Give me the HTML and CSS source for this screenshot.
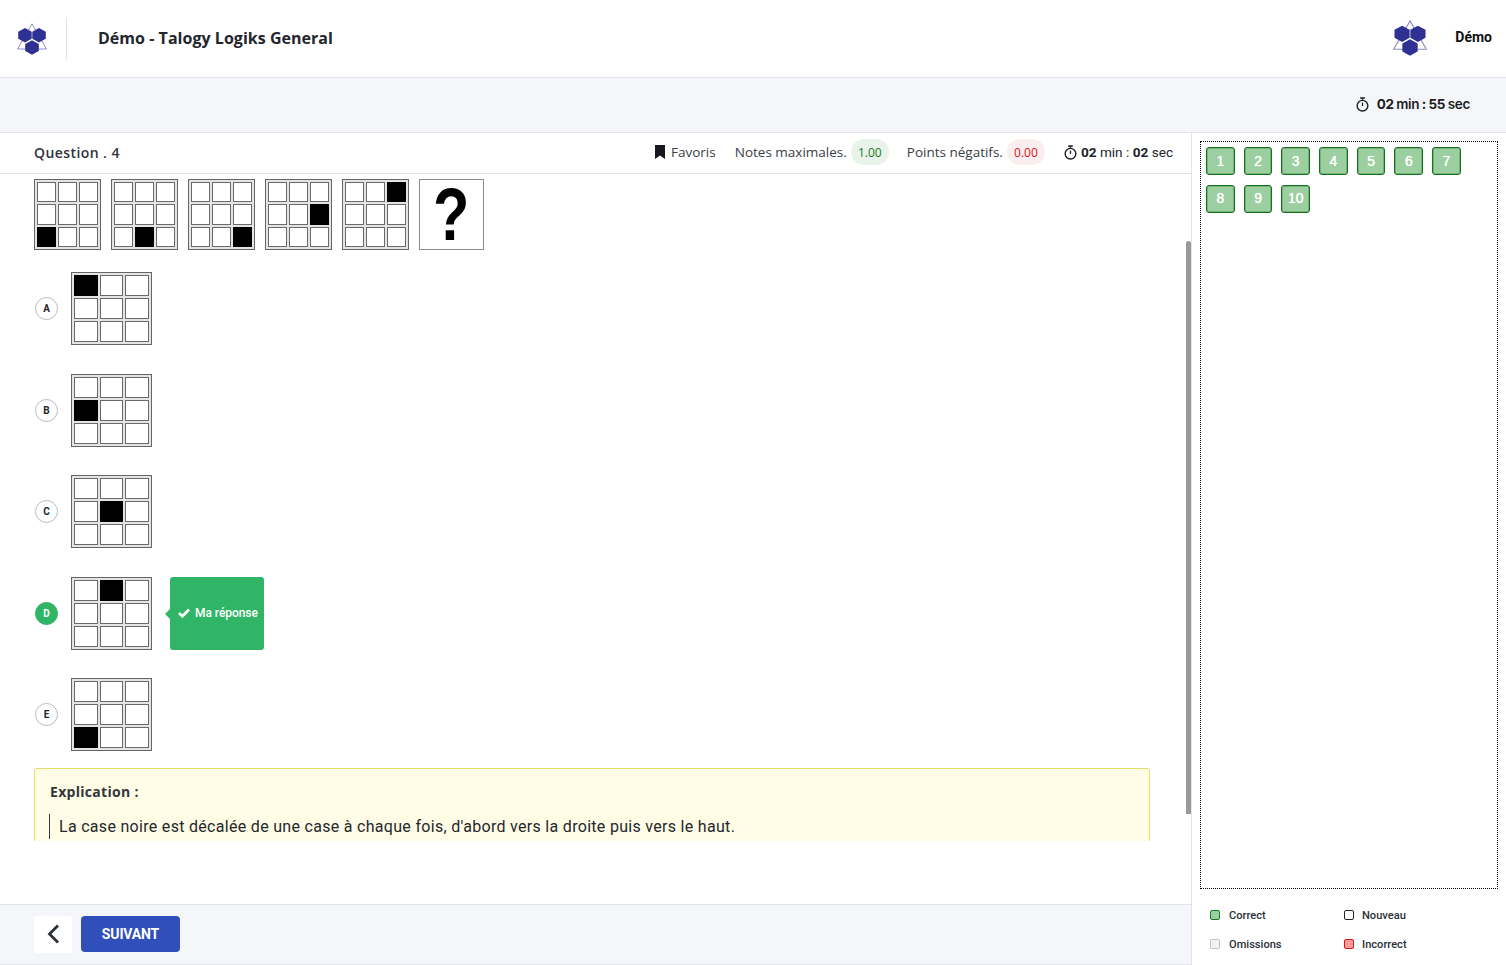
FILE: index.html
```html
<!DOCTYPE html>
<html lang="fr">
<head>
<meta charset="utf-8">
<title>Démo - Talogy Logiks General</title>
<link rel="stylesheet" href="styles.css">
</head>
<body>
<svg class="defs" width="0" height="0" aria-hidden="true">
  <symbol id="logo" viewBox="0 0 30 32">
    <path d="M15 .8 L29.500 26 L.5 26 Z" fill="none" stroke="#8d8fc6" stroke-width="1"/>
    <path d="M8 5 L14.700 8.700 V15.800 L8 19.500 L1.200 15.800 V8.700 Z M22 5 L28.800 8.700 V15.800 L22 19.500 L15.300 15.800 V8.700 Z M15 17.200 L21.800 20.900 V28 L15 31.700 L8.200 28 V20.900 Z" fill="#2e3192"/>
  </symbol>
  <symbol id="timer" viewBox="0 0 16 16">
    <path d="M5.500 1h5M8 1v2" fill="none" stroke="currentColor" stroke-width="1.500"/>
    <circle cx="8" cy="9.300" r="5.700" fill="none" stroke="currentColor" stroke-width="1.500"/>
    <path d="M8 9.500V6" fill="none" stroke="currentColor" stroke-width="1.400"/>
  </symbol>
</svg>
<header class="top">
  <svg class="logo"><use href="#logo"/></svg>
  <span class="divider"></span>
  <h1 class="title">Démo - Talogy Logiks General</h1>
  <svg class="logo logo-user"><use href="#logo"/></svg>
  <span class="user">Démo</span>
</header>
<div class="sub">
  <svg class="timer"><use href="#timer"/></svg>
  <span class="total-time"><b>02</b> <i>min</i> <b>:</b> <b>55</b> <i>sec</i></span>
</div>
<main class="main">
  <section class="left">
    <div class="qbar">
      <span class="qnum">Question . 4</span>
      <div class="qmeta">
        <span class="meta fav"><svg class="bookmark" viewBox="0 0 10 14"><path d="M0 0H10V14L5 10.500 0 14Z"/></svg>Favoris</span>
        <span class="meta">Notes maximales.<em class="pill pos">1.00</em></span>
        <span class="meta">Points négatifs.<em class="pill neg">0.00</em></span>
        <span class="meta qtime"><svg class="timer timer-q"><use href="#timer"/></svg><b>02</b> min : <b>02</b> sec</span>
      </div>
    </div>
    <div class="scroll">
      <div class="series">
        <div class="fig small"><i></i><i></i><i></i><i></i><i></i><i></i><i class="k"></i><i></i><i></i></div>
        <div class="fig small"><i></i><i></i><i></i><i></i><i></i><i></i><i></i><i class="k"></i><i></i></div>
        <div class="fig small"><i></i><i></i><i></i><i></i><i></i><i></i><i></i><i></i><i class="k"></i></div>
        <div class="fig small"><i></i><i></i><i></i><i></i><i></i><i class="k"></i><i></i><i></i><i></i></div>
        <div class="fig small"><i></i><i></i><i class="k"></i><i></i><i></i><i></i><i></i><i></i><i></i></div>
        <div class="qmark"><span class="qglyph">?</span></div>
      </div>
      <div class="option">
        <span class="letter">A</span>
        <div class="fig"><i class="k"></i><i></i><i></i><i></i><i></i><i></i><i></i><i></i><i></i></div>
      </div>
      <div class="option">
        <span class="letter">B</span>
        <div class="fig"><i></i><i></i><i></i><i class="k"></i><i></i><i></i><i></i><i></i><i></i></div>
      </div>
      <div class="option">
        <span class="letter">C</span>
        <div class="fig"><i></i><i></i><i></i><i></i><i class="k"></i><i></i><i></i><i></i><i></i></div>
      </div>
      <div class="option">
        <span class="letter chosen">D</span>
        <div class="fig"><i></i><i class="k"></i><i></i><i></i><i></i><i></i><i></i><i></i><i></i></div>
        <div class="answer">
          <svg class="check" viewBox="0 0 12 10"><path d="M1 5 4.400 8.300 11 1.500" fill="none" stroke="#fff" stroke-width="2.700"/></svg>
          Ma réponse
        </div>
      </div>
      <div class="option">
        <span class="letter">E</span>
        <div class="fig"><i></i><i></i><i></i><i></i><i></i><i></i><i class="k"></i><i></i><i></i></div>
      </div>
      <div class="explain">
        <h2 class="explain-title">Explication :</h2>
        <p class="explain-text">La case noire est décalée de une case à chaque fois, d'abord vers la droite puis vers le haut.</p>
      </div>
    </div>
    <div class="footer">
      <button class="back" aria-label="Précédent"><svg viewBox="0 0 14 20" width="14" height="20"><path d="M12 1.500 3.500 10 12 18.500" fill="none" stroke="#2b2f38" stroke-width="2.800"/></svg></button>
      <button class="next">SUIVANT</button>
    </div>
    <span class="scrollbar"></span>
  </section>
  <aside class="right">
    <div class="palette">
      <span class="num">1</span><span class="num">2</span><span class="num">3</span><span class="num">4</span><span class="num">5</span><span class="num">6</span><span class="num">7</span><span class="num">8</span><span class="num">9</span><span class="num">10</span>
    </div>
    <div class="legend">
      <span class="key"><i class="sw sw-correct"></i>Correct</span>
      <span class="key"><i class="sw sw-new"></i>Nouveau</span>
      <span class="key"><i class="sw sw-omit"></i>Omissions</span>
      <span class="key"><i class="sw sw-wrong"></i>Incorrect</span>
    </div>
  </aside>
</main>
</body>
</html>
```
FILE: styles.css
```css
* { box-sizing: border-box; }
html, body { margin: 0; height: 965px; overflow: hidden; background: #fff; }
body { font-family: "Open Sans", sans-serif; color: #2b2f38; }
.defs { position: absolute; }

.top { height: 78px; display: flex; align-items: center; border-bottom: 1px solid #e2e4ea; padding-left: 17px; padding-right: 14px; }
.logo { width: 30px; height: 32px; flex: none; }
.divider { width: 1px; height: 42px; background: #e3e4e8; margin-left: 19px; margin-right: 31px; }
.title { margin: 0; padding-bottom: 2px; font-size: 16px; font-weight: 700; letter-spacing: 0.03px; color: #23262d; flex: 1; }
.logo-user { width: 34px; height: 36px; margin-right: 28px; margin-bottom: 1px; }
.user { font-family: "Roboto", sans-serif; font-weight: 700; font-size: 14px; color: #111; padding-bottom: 3px; }

.sub { height: 55px; background: #f5f6fa; border-bottom: 1px solid #e2e4ea; display: flex; align-items: center; justify-content: flex-end; padding-right: 36px; padding-bottom: 2px; }
.timer { width: 15px; height: 15px; color: #1c1e24; margin-right: 7px; }
.total-time { font-family: "Inter", sans-serif; font-size: 13.500px; color: #1c1e24; word-spacing: -1px; letter-spacing: -0.3px; }
.total-time b { font-weight: 700; }
.total-time i { font-style: normal; font-weight: 600; }

.main { display: flex; height: 832px; }
.left { position: relative; width: 1192px; flex: none; border-right: 1px solid #e2e4ea; display: flex; flex-direction: column; }
.qbar { height: 41px; flex: none; border-bottom: 1px solid #e2e4ea; display: flex; align-items: center; justify-content: space-between; padding: 0 18px 2px 34px; }
.qnum { font-size: 14px; font-weight: 600; letter-spacing: 0.42px; color: #30343c; }
.qmeta { display: flex; align-items: center; gap: 18px; }
.meta { display: flex; align-items: center; font-size: 13.500px; color: #3a3e46; }
.fav { margin-right: 1px; }
.bookmark { width: 10px; height: 14px; margin-right: 6px; fill: #16181d; }
.pill { font-style: normal; font-size: 12px; height: 26px; width: 38px; border-radius: 13px; display: flex; align-items: center; justify-content: center; margin-left: 4px; }
.pos { background: #e9f3e9; color: #1a7a1f; }
.neg { background: #fbeeee; color: #d8141c; }
.qtime { font-family: "Roboto", sans-serif; font-size: 13.600px; color: #22252b; white-space: pre; }
.qtime b { font-weight: 700; }
.timer-q { width: 15px; height: 17px; margin-right: 3px; }

.scroll { height: 667px; flex: none; overflow: hidden; padding: 5px 41px 0 34px; }
.series { display: flex; gap: 10px; height: 71px; margin-bottom: 22px; }

.fig { width: 81px; height: 73px; flex: none; display: grid; grid-template-columns: repeat(3, 1fr); grid-template-rows: repeat(3, 1fr); gap: 2px; padding: 2px; border: 1px solid #666; background: #e4e4e4; }
.fig i { display: block; border: 1px solid #6a6a6a; background: #fff; }
.fig i.k { background: #000; border-color: #000; }
.fig.small { width: 67px; height: 71px; }
.qmark { width: 65px; height: 71px; border: 1px solid #8c8c8c; display: flex; align-items: center; justify-content: center; font-family: "Liberation Sans", sans-serif; font-weight: 700; font-size: 66px; color: #000; line-height: 69px; }
.qglyph { display: block; transform: scale(0.9, 1.12); }

.option { display: flex; align-items: center; height: 73px; margin-bottom: 28.500px; }
.letter { width: 23px; height: 23px; flex: none; border-radius: 50%; border: 1px solid #b9bcc2; display: flex; align-items: center; justify-content: center; font-family: "Roboto", sans-serif; font-weight: 700; font-size: 10px; color: #22252b; margin-left: 1px; margin-right: 13px; }
.letter.chosen { background: #30b566; border-color: #30b566; color: #fff; }
.answer { position: relative; margin-left: 18px; width: 94px; height: 73px; border-radius: 3px; background: #30b566; color: #fff; display: flex; align-items: center; font-family: "Roboto", sans-serif; font-size: 12px; font-weight: 500; letter-spacing: -0.05px; padding-left: 8px; white-space: nowrap; }
.answer::before { content: ""; position: absolute; left: -5px; top: 32px; border-style: solid; border-width: 5px 5px 5px 0; border-color: transparent #30b566 transparent transparent; }
.check { width: 12px; height: 10px; margin-right: 5px; flex: none; }

.explain { width: 1116px; height: 100px; margin-top: -11.500px; border: 1px solid #e6dc63; border-radius: 3px 3px 0 0; background: #fffde5; padding: 13px 14px; }
.explain-title { margin: 0 0 12px; padding-left: 1px; font-size: 14px; font-weight: 700; letter-spacing: 0.3px; line-height: 20px; color: #33363c; }
.explain-text { margin: 0; border-left: 1px solid #33363c; padding-left: 9px; font-family: "Roboto", sans-serif; font-size: 16px; line-height: 25px; letter-spacing: 0.3px; color: #24272d; }

.footer { margin-top: auto; height: 61px; flex: none; background: #f5f6fa; border-top: 1px solid #e2e4ea; border-bottom: 1px solid #e2e4ea; display: flex; align-items: center; gap: 9px; padding: 0 0 1px 34px; }
.back { width: 38px; height: 37px; border: 0; background: #fff; border-radius: 3px; display: flex; align-items: center; justify-content: center; padding: 0; }
.next { width: 99px; height: 36px; border: 0; border-radius: 4px; background: #304fbb; color: #fff; font-family: "Roboto", sans-serif; font-weight: 700; font-size: 14px; letter-spacing: -0.15px; }
.scrollbar { position: absolute; left: 1186px; top: 108px; width: 5px; height: 573px; border-radius: 3px 3px 0 0; background: #999; }

.right { flex: 1; padding: 8px 8px 0; }
.palette { width: 298px; height: 748px; border: 1px dotted #000; padding: 5px; display: flex; flex-wrap: wrap; align-content: flex-start; column-gap: 9px; row-gap: 9.500px; }
.num { width: 28.700px; height: 28px; border: 1px solid #17701d; border-radius: 3px; background: #9ccf9f; box-shadow: inset 0 0 0 1px rgba(26, 115, 32, 0.3); color: #fff; text-shadow: 0 0 1px #fff; display: flex; align-items: center; justify-content: center; font-family: "Liberation Sans", sans-serif; font-size: 14px; padding-bottom: 1px; }
.legend { display: grid; grid-template-columns: 134px 1fr; grid-auto-rows: 29px; padding: 12px 0 0 10px; }
.key { display: flex; align-items: center; font-family: "Roboto", sans-serif; font-size: 11.100px; font-weight: 500; color: #2b2f38; }
.sw { width: 10px; height: 10px; flex: none; border-radius: 2px; border: 1px solid; margin-right: 9px; margin-bottom: 1px; }
.key:nth-child(even) .sw { margin-right: 8px; }
.sw-correct { background: #9ccf9f; border-color: #1d7d23; }
.sw-new { background: #fff; border-color: #22252b; }
.sw-omit { background: #f1f2f6; border-color: #c3c5cb; }
.sw-wrong { background: #ff9c9c; border-color: #d8141c; }
```
